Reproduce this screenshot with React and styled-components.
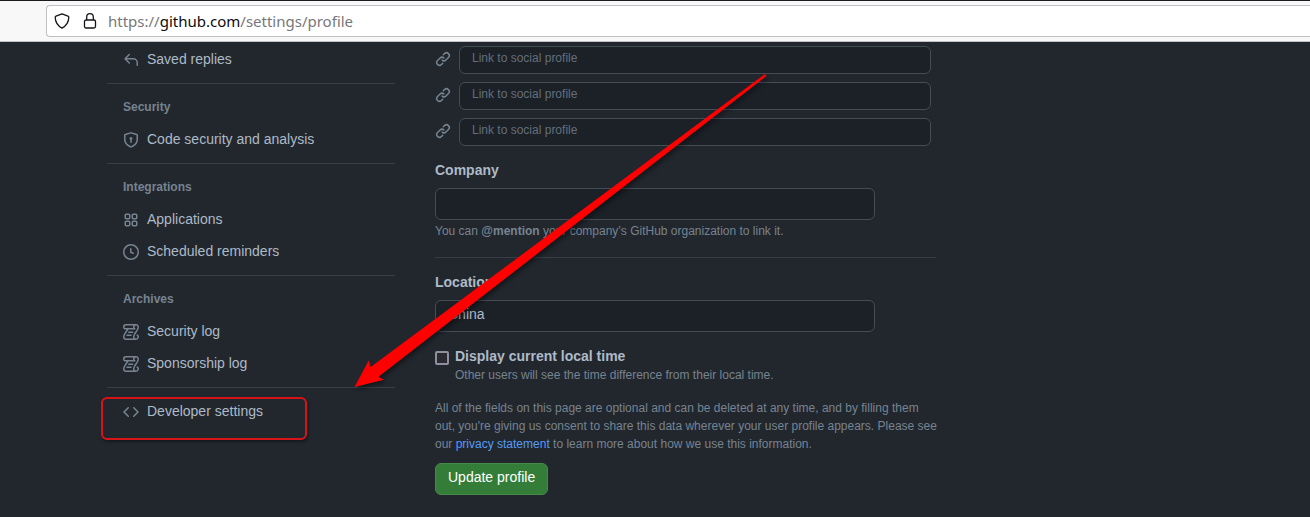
import React from "react";
import styled, { createGlobalStyle } from "styled-components";

const GlobalStyle = createGlobalStyle`
  * { box-sizing: border-box; }
  body {
    margin: 0;
    background: #22272e;
    color: #adbac7;
    font: 14px/20px "Liberation Sans", Arial, sans-serif;
  }
`;

const Page = styled.div`
  position: relative;
  overflow: hidden;
`;

const BrowserBar = styled.header`
  height: 42px;
  padding: 4px 0 4px 46px;
  background: #f8f8f9;
  border-top: 1px solid #1d1a20;
  border-bottom: 1px solid #c2c2c6;
`;

const AddressBox = styled.div`
  display: flex;
  align-items: center;
  height: 32px;
  padding-left: 7px;
  background: #fff;
  border: 1px solid #bfbfc4;
  border-right: 0;
  border-radius: 4px 0 0 4px;
  color: #15141a;
`;

const BarIcon = styled.svg`
  flex: none;
  width: 16px;
  height: 16px;
  margin-right: 12px;
  fill: none;
  stroke: currentColor;
  stroke-width: 1.3;
  stroke-linejoin: round;
`;

const Address = styled.span`
  font: 15px/20px "Noto Sans", sans-serif;
  color: #77777b;
  margin-left: -2px;
  b { font-weight: 400; color: #0c0c0d; }
`;

const Columns = styled.div`
  display: flex;
  gap: 40px;
  padding: 1px 107px 0;
`;

const Sidebar = styled.nav`
  flex: 0 0 288px;
`;

const Group = styled.section`
  & + & {
    margin-top: 8px;
    padding-top: 7px;
    border-top: 1px solid #373e47;
  }
`;

const GroupTitle = styled.h3`
  margin: 0;
  padding: 0 16px;
  font-size: 12px;
  line-height: 32px;
  font-weight: 700;
  color: #768390;
`;

const Octicon = styled.svg`
  flex: none;
  width: 16px;
  height: 16px;
  fill: #768390;
`;

const NavLink = styled.a`
  display: flex;
  align-items: center;
  gap: 8px;
  height: 32px;
  padding: 0 16px;
  color: #adbac7;
  text-decoration: none;
  ${Octicon} { margin-top: 2px; }
`;

const Main = styled.form`
  flex: 0 1 501px;
  min-width: 0;
  padding: 3px 0 22px;
`;

const SocialList = styled.div`
  display: grid;
  gap: 8px;
  padding-right: 5px;
`;

const SocialRow = styled.label`
  display: flex;
  align-items: center;
  gap: 8px;
  ${Octicon} { margin-bottom: 2px; }
`;

const TextInput = styled.input`
  display: block;
  width: 100%;
  max-width: ${(p) => (p.$small ? "none" : "440px")};
  height: ${(p) => (p.$small ? "28px" : "32px")};
  padding: 0 12px 4px;
  background: #1c2128;
  border: 1px solid #444c56;
  border-radius: 6px;
  color: #adbac7;
  font: ${(p) => (p.$small ? "12px" : "14px")} "Liberation Sans", Arial, sans-serif;
  &::placeholder { color: #636e7b; opacity: 1; }
`;

const Field = styled.div`
  padding-top: 14px;
`;

const FieldLabel = styled.label`
  display: block;
  margin-bottom: 8px;
  font-weight: 700;
`;

const Note = styled.p`
  margin: 0;
  font-size: 12px;
  line-height: 18px;
  color: #768390;
`;

const FieldNote = styled(Note)`
  padding: 2px 0 17px;
  border-bottom: 1px solid #373e47;
`;

const CheckRow = styled.div`
  display: grid;
  grid-template-columns: 14px 1fr;
  column-gap: 6px;
  margin: 14px 0 15px;
`;

const CheckLabel = styled.label`
  font-weight: 700;
`;

const CheckBox = styled.input`
  appearance: none;
  width: 14px;
  height: 14px;
  margin: 5px 0 0;
  border: 2px solid #8f8f9d;
  border-radius: 2px;
  background: #2b2a33;
`;

const CheckNote = styled(Note)`
  grid-column: 2;
`;

const Disclaimer = styled(Note)`
  margin-right: -4px;
`;

const Link = styled.a`
  color: #539bf5;
  text-decoration: none;
`;

const SubmitButton = styled.button`
  display: block;
  height: 32px;
  margin-top: 10px;
  padding: 0 12px 4px;
  background: #347d39;
  border: 1px solid #46894b;
  border-radius: 6px;
  color: #fff;
  font: 14px/20px "Liberation Sans", Arial, sans-serif;
`;

const Highlight = styled.div`
  position: absolute;
  left: 101px;
  top: 397px;
  width: 206px;
  height: 43px;
  border: 2px solid #d81418;
  border-radius: 6px;
  box-shadow: 1px 2px 3px rgba(0, 0, 0, 0.4);
  pointer-events: none;
`;

const Arrow = styled.svg`
  position: absolute;
  left: 340px;
  top: 60px;
  width: 440px;
  height: 340px;
  fill: #fe0000;
  filter: drop-shadow(2px 3px 2px rgba(0, 0, 0, 0.4));
  pointer-events: none;
`;

const paths = {
  reply: "M6.78 1.97a.75.75 0 0 1 0 1.06L3.81 6h6.44A4.75 4.75 0 0 1 15 10.75v2.5a.75.75 0 0 1-1.5 0v-2.5a3.25 3.25 0 0 0-3.25-3.25H3.81l2.97 2.97a.749.749 0 0 1-.326 1.275.749.749 0 0 1-.734-.215L1.47 7.28a.75.75 0 0 1 0-1.06l4.25-4.25a.75.75 0 0 1 1.06 0Z",
  shield: "m8.533.133 5.25 1.68A1.75 1.75 0 0 1 15 3.48V7c0 1.566-.32 3.182-1.303 4.682-.983 1.498-2.585 2.813-5.032 3.855a1.697 1.697 0 0 1-1.33 0c-2.447-1.042-4.049-2.357-5.032-3.855C1.32 10.182 1 8.566 1 7V3.48a1.755 1.755 0 0 1 1.217-1.667l5.25-1.68a1.748 1.748 0 0 1 1.066 0Zm-.61 1.429.001.001-5.25 1.68a.251.251 0 0 0-.174.237V7c0 1.36.275 2.666 1.057 3.859.784 1.194 2.121 2.342 4.366 3.298a.196.196 0 0 0 .154 0c2.245-.957 3.582-2.103 4.366-3.297C13.225 9.666 13.5 8.358 13.5 7V3.48a.25.25 0 0 0-.174-.238l-5.25-1.68a.25.25 0 0 0-.153 0ZM9.5 6.5c0 .536-.286 1.032-.75 1.3v2.45a.75.75 0 0 1-1.5 0V7.8A1.5 1.5 0 1 1 9.5 6.5Z",
  apps: "M1.5 3.25c0-.966.784-1.75 1.75-1.75h2.5c.966 0 1.75.784 1.75 1.75v2.5A1.75 1.75 0 0 1 5.75 7.5h-2.5A1.75 1.75 0 0 1 1.5 5.75ZM3.25 3a.25.25 0 0 0-.25.25v2.5c0 .138.112.25.25.25h2.5A.25.25 0 0 0 6 5.75v-2.5A.25.25 0 0 0 5.75 3ZM8.5 3.25c0-.966.784-1.75 1.75-1.75h2.5c.966 0 1.75.784 1.75 1.75v2.5a1.75 1.75 0 0 1-1.75 1.75h-2.5A1.75 1.75 0 0 1 8.5 5.75ZM10.25 3a.25.25 0 0 0-.25.25v2.5c0 .138.112.25.25.25h2.5a.25.25 0 0 0 .25-.25v-2.5a.25.25 0 0 0-.25-.25ZM1.5 10.25c0-.966.784-1.75 1.75-1.75h2.5c.966 0 1.75.784 1.75 1.75v2.5a1.75 1.75 0 0 1-1.75 1.75h-2.5a1.75 1.75 0 0 1-1.75-1.75ZM3.25 10a.25.25 0 0 0-.25.25v2.5c0 .138.112.25.25.25h2.5a.25.25 0 0 0 .25-.25v-2.5a.25.25 0 0 0-.25-.25ZM8.5 10.25c0-.966.784-1.75 1.75-1.75h2.5c.966 0 1.75.784 1.75 1.75v2.5a1.75 1.75 0 0 1-1.75 1.75h-2.5a1.75 1.75 0 0 1-1.75-1.75ZM10.25 10a.25.25 0 0 0-.25.25v2.5c0 .138.112.25.25.25h2.5a.25.25 0 0 0 .25-.25v-2.5a.25.25 0 0 0-.25-.25Z",
  clock: "M8 0a8 8 0 1 1 0 16A8 8 0 0 1 8 0ZM1.5 8a6.5 6.5 0 1 0 13 0 6.5 6.5 0 0 0-13 0Zm7-3.25v2.992l2.028.812a.75.75 0 0 1-.557 1.392l-2.5-1A.751.751 0 0 1 7 8.25v-3.5a.75.75 0 0 1 1.5 0Z",
  log: "M5 8.25a.75.75 0 0 1 .75-.75h4a.75.75 0 0 1 0 1.5h-4A.75.75 0 0 1 5 8.25ZM4 10.5A.75.75 0 0 0 4 12h4a.75.75 0 0 0 0-1.5H4ZM13-.005c1.654 0 3 1.328 3 3 0 .982-.338 1.933-.783 2.818-.443.879-1.028 1.758-1.582 2.588l-.011.017c-.568.853-1.104 1.659-1.501 2.446-.398.789-.623 1.494-.623 2.136a1.5 1.5 0 1 0 2.333-1.248.75.75 0 0 1 .834-1.246A3 3 0 0 1 13 16H3a3 3 0 0 1-3-3c0-1.582.891-3.135 1.777-4.506.209-.322.418-.637.623-.946.473-.709.923-1.386 1.287-2.048H2.51c-.576 0-1.381-.133-1.907-.783A2.68 2.68 0 0 1 0 2.995a3 3 0 0 1 3-3Zm0 1.5a1.5 1.5 0 0 0-1.5 1.5c0 .476.223.834.667 1.132A.75.75 0 0 1 11.75 5.5H5.368c-.467 1.003-1.141 2.015-1.773 2.963-.192.289-.381.571-.558.845C2.13 10.711 1.5 11.916 1.5 13A1.5 1.5 0 0 0 3 14.5h7.401A2.989 2.989 0 0 1 10 13c0-.979.338-1.928.784-2.812.441-.874 1.023-1.748 1.575-2.576l.017-.026c.568-.853 1.103-1.658 1.501-2.448.398-.79.623-1.497.623-2.143 0-.838-.669-1.5-1.5-1.5Zm-10 0a1.5 1.5 0 0 0-1.5 1.5c0 .321.1.569.27.778.097.12.325.227.74.227h7.674A2.737 2.737 0 0 1 10 2.995c0-.546.146-1.059.401-1.5Z",
  code: "m11.28 3.22 4.25 4.25a.75.75 0 0 1 0 1.06l-4.25 4.25a.749.749 0 0 1-1.275-.326.749.749 0 0 1 .215-.734L13.94 8l-3.72-3.72a.749.749 0 0 1 .326-1.275.749.749 0 0 1 .734.215Zm-6.56 0a.751.751 0 0 1 1.042.018.751.751 0 0 1 .018 1.042L2.06 8l3.72 3.72a.749.749 0 0 1-.326 1.275.749.749 0 0 1-.734-.215L.47 8.53a.75.75 0 0 1 0-1.06Z",
  link: "m7.775 3.275 1.25-1.25a3.5 3.5 0 1 1 4.95 4.95l-2.5 2.5a3.5 3.5 0 0 1-4.95 0 .751.751 0 0 1 .018-1.042.751.751 0 0 1 1.042-.018 1.998 1.998 0 0 0 2.83 0l2.5-2.5a2.002 2.002 0 0 0-2.83-2.83l-1.25 1.25a.751.751 0 0 1-1.042-.018.751.751 0 0 1-.018-1.042Zm-4.69 9.64a1.998 1.998 0 0 0 2.83 0l1.25-1.25a.751.751 0 0 1 1.042.018.751.751 0 0 1 .018 1.042l-1.25 1.25a3.5 3.5 0 1 1-4.95-4.95l2.5-2.5a3.5 3.5 0 0 1 4.95 0 .751.751 0 0 1-.018 1.042.751.751 0 0 1-1.042.018 1.998 1.998 0 0 0-2.83 0l-2.5 2.5a1.998 1.998 0 0 0 0 2.83Z",
};

const groups = [
  { items: [["reply", "Saved replies"]] },
  { title: "Security", items: [["shield", "Code security and analysis"]] },
  { title: "Integrations", items: [["apps", "Applications"], ["clock", "Scheduled reminders"]] },
  { title: "Archives", items: [["log", "Security log"], ["log", "Sponsorship log"]] },
  { items: [["code", "Developer settings"]] },
];

const Icon = ({ name }) => (
  <Octicon viewBox="0 0 16 16" aria-hidden="true">
    <path d={paths[name]} />
  </Octicon>
);

export default function App() {
  return (
    <Page>
      <GlobalStyle />
      <BrowserBar>
        <AddressBox>
          <BarIcon viewBox="0 0 16 16" aria-hidden="true">
            <path d="M8 .9 14 3.2c.5.2.8.6.8 1.1-.1 5-2.6 8.6-6.8 10.8C3.8 12.9 1.3 9.3 1.2 4.3c0-.5.3-.9.8-1.1Z" />
          </BarIcon>
          <BarIcon viewBox="0 0 16 16" aria-hidden="true">
            <rect x="2.5" y="7" width="11" height="8" rx="1.5" />
            <path d="M4.7 7V4a3.3 3.3 0 0 1 6.6 0v3" />
          </BarIcon>
          <Address>https://<b>github.com</b>/settings/profile</Address>
        </AddressBox>
      </BrowserBar>
      <Columns>
        <Sidebar aria-label="Settings">
          {groups.map((group, i) => (
            <Group key={i}>
              {group.title && <GroupTitle>{group.title}</GroupTitle>}
              {group.items.map(([icon, label]) => (
                <NavLink href="#" key={label}>
                  <Icon name={icon} />
                  {label}
                </NavLink>
              ))}
            </Group>
          ))}
        </Sidebar>
        <Main onSubmit={(e) => e.preventDefault()}>
          <SocialList>
            {[1, 2, 3].map((n) => (
              <SocialRow key={n}>
                <Icon name="link" />
                <TextInput $small type="text" placeholder="Link to social profile" aria-label={`Social profile ${n}`} />
              </SocialRow>
            ))}
          </SocialList>
          <Field>
            <FieldLabel htmlFor="company">Company</FieldLabel>
            <TextInput id="company" type="text" />
            <FieldNote>
              You can <b>@mention</b> your company’s GitHub organization to link it.
            </FieldNote>
          </Field>
          <Field>
            <FieldLabel htmlFor="location">Location</FieldLabel>
            <TextInput id="location" type="text" defaultValue="China" />
          </Field>
          <CheckRow>
            <CheckBox id="local-time" type="checkbox" />
            <CheckLabel htmlFor="local-time">Display current local time</CheckLabel>
            <CheckNote>Other users will see the time difference from their local time.</CheckNote>
          </CheckRow>
          <Disclaimer>
            All of the fields on this page are optional and can be deleted at any time, and by filling them out,
            you're giving us consent to share this data wherever your user profile appears. Please see our{" "}
            <Link href="#">privacy statement</Link> to learn more about how we use this information.
          </Disclaimer>
          <SubmitButton type="submit">Update profile</SubmitButton>
        </Main>
      </Columns>
      <Highlight />
      <Arrow viewBox="340 60 440 340" aria-hidden="true">
        <path d="M765 74 370.7 367l-2-6.5L354.5 387l29.5-7.3-5.5-2.9L766.5 76Z" />
      </Arrow>
    </Page>
  );
}
